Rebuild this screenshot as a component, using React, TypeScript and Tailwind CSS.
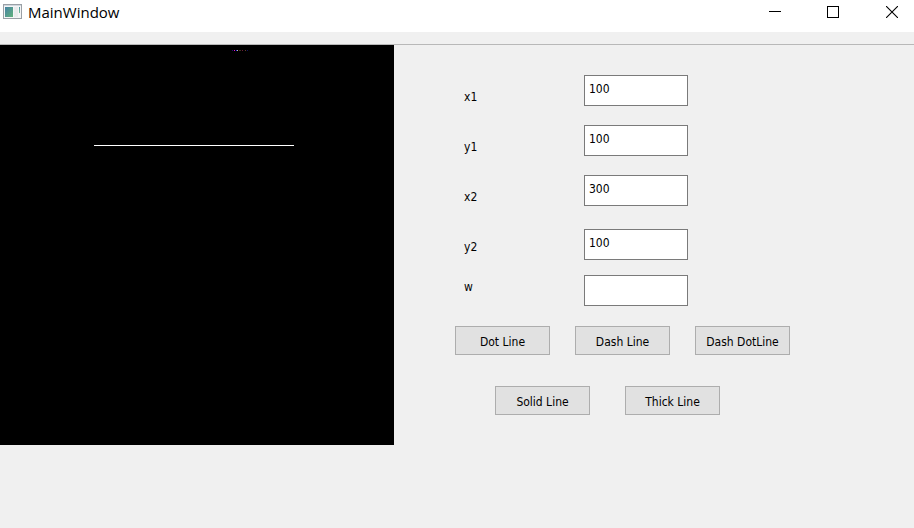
import React from "react";

type Field = { id: string; value: string; row: string; label: string };

const fields: Field[] = [
  { id: "x1", value: "100", row: "h-[50px]", label: "pt-3" },
  { id: "y1", value: "100", row: "h-[50px]", label: "pt-3" },
  { id: "x2", value: "300", row: "h-[54px]", label: "pt-3" },
  { id: "y2", value: "100", row: "h-[46px]", label: "pt-2" },
  { id: "w", value: "", row: "h-[51px]", label: "pt-0.5" },
];

// Leftover pixels near the top edge of the raster, one entry per pixel.
const specks: [number, string][] = [
  [232, "#1c0a70"],
  [234, "#e010d0"],
  [236, "#2020e0"],
  [237, "#c0c8a0"],
  [239, "#503010"],
  [240, "#403020"],
  [242, "#701838"],
  [245, "#60402a"],
  [247, "#101060"],
];

function PushButton({ children }: { children: React.ReactNode }) {
  return (
    <button
      type="button"
      className="h-[29px] w-[95px] shrink-0 whitespace-nowrap border border-[#adadad] bg-[#e1e1e1] pt-0.5 text-center leading-4 hover:border-[#0078d7] hover:bg-[#e5f1fb]"
    >
      {children}
    </button>
  );
}

function TitleBar() {
  return (
    <header className="flex h-8 items-start justify-between bg-white">
      <div className="flex items-start gap-1.5 pl-[3px]">
        <svg width="19" height="16" viewBox="0 0 19 16" className="mt-1" shapeRendering="crispEdges" aria-hidden="true">
          <defs>
            <linearGradient id="pane" x1="0" y1="0" x2="1" y2="1">
              <stop offset="0" stopColor="#4682a4" />
              <stop offset="1" stopColor="#62b27c" />
            </linearGradient>
            <linearGradient id="side" x1="0" y1="0" x2="0" y2="1">
              <stop offset="0" stopColor="#4f93a0" />
              <stop offset="1" stopColor="#7cc09a" />
            </linearGradient>
          </defs>
          <rect x="0.5" y="0.5" width="18" height="14" fill="#f4f5f6" stroke="#9aa0a6" />
          <rect x="1" y="1" width="17" height="1" fill="#cfd6dd" />
          <rect x="2" y="3" width="8" height="10" fill="url(#pane)" />
          <rect x="11" y="3" width="4" height="10" fill="#e9ebec" />
          <rect x="16" y="3" width="1" height="6" fill="url(#side)" />
        </svg>
        <h1 className="font-['Open_Sans',sans-serif] text-[15px] leading-6">MainWindow</h1>
      </div>
      <div className="flex">
        <button type="button" aria-label="Minimize" className="flex h-6 w-[58px] items-center justify-center">
          <svg width="12" height="12" shapeRendering="crispEdges">
            <path d="M0 5.5H12" stroke="#000" />
          </svg>
        </button>
        <button type="button" aria-label="Maximize" className="flex h-6 w-[58px] items-center justify-center">
          <svg width="12" height="12" shapeRendering="crispEdges">
            <rect x="0.5" y="0.5" width="11" height="11" fill="none" stroke="#000" />
          </svg>
        </button>
        <button type="button" aria-label="Close" className="flex h-6 w-[52px] items-center justify-end pr-4">
          <svg width="12" height="12">
            <path d="M0 0L12 12M12 0L0 12" stroke="#000" strokeWidth="1.1" />
          </svg>
        </button>
      </div>
    </header>
  );
}

export default function App() {
  return (
    <div className="flex min-h-screen flex-col bg-[#f0f0f0] font-['DejaVu_Sans_Condensed','DejaVu_Sans',sans-serif] text-[12px] text-black">
      <TitleBar />
      <div className="h-[13px] border-b border-[#b8b8b8]" />
      <main className="flex items-start">
        <svg width="394" height="400" viewBox="0 0 394 400" className="shrink-0 bg-black" shapeRendering="crispEdges" role="img" aria-label="Drawing area">
          {specks.map(([x, fill]) => (
            <rect key={x} x={x} y="5" width="1" height="1" fill={fill} />
          ))}
          <rect x="94" y="100" width="200" height="1" fill="#fff" />
        </svg>
        <form className="pl-[61px] pt-[30px]">
          <div className="pl-[9px]">
            {fields.map((f) => (
              <div key={f.id} className={`flex items-start ${f.row}`}>
                <label htmlFor={f.id} className={`w-[120px] leading-5 ${f.label}`}>
                  {f.id}
                </label>
                <input
                  id={f.id}
                  type="text"
                  defaultValue={f.value}
                  className="h-[31px] w-[104px] border border-[#7a7a7a] bg-white px-1 pb-1 outline-none focus:border-[#0078d7]"
                />
              </div>
            ))}
          </div>
          <div className="flex gap-[25px]">
            <PushButton>Dot Line</PushButton>
            <PushButton>Dash Line</PushButton>
            <PushButton>Dash DotLine</PushButton>
          </div>
          <div className="flex gap-[35px] pl-10 pt-[31px]">
            <PushButton>Solid Line</PushButton>
            <PushButton>Thick Line</PushButton>
          </div>
        </form>
      </main>
    </div>
  );
}
